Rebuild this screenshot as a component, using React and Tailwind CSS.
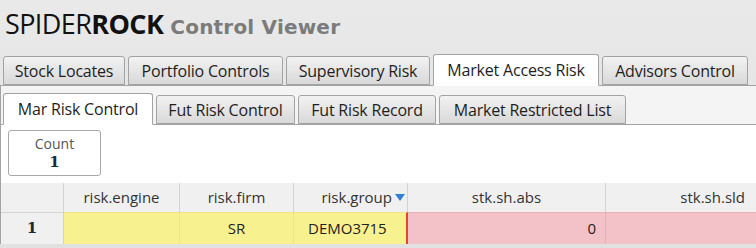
import React from 'react'

const topTabs = [
  { label: 'Stock Locates', w: 'w-[122px]' },
  { label: 'Portfolio Controls', w: 'w-[155px]' },
  { label: 'Supervisory Risk', w: 'w-[144px]' },
  { label: 'Market Access Risk', w: 'w-[166px]', active: true },
  { label: 'Advisors Control', w: 'w-[146px]' },
]

const subTabs = [
  { label: 'Mar Risk Control', w: 'w-[150px]', active: true },
  { label: 'Fut Risk Control', w: 'w-[139px]' },
  { label: 'Fut Risk Record', w: 'w-[138px]' },
  { label: 'Market Restricted List', w: 'w-[187px]' },
]

function Tab({ label, w, active }) {
  return (
    <div
      className={[
        'flex shrink-0 items-center justify-center rounded-t-[3px] border border-[#a3a3a3] text-[16px] tracking-[-0.2px] text-[#1e1e1e]',
        w,
        active
          ? 'relative z-10 -mb-px h-[32px] border-b-white bg-white'
          : 'h-[29px] bg-gradient-to-b from-[#f2f2f2] to-[#d9d9d9]',
      ].join(' ')}
    >
      {label}
    </div>
  )
}

export default function App() {
  return (
    <div className="h-[248px] w-[756px] overflow-hidden bg-gradient-to-b from-[#e9e9e9] to-[#e1e1e1] font-['Open_Sans','Noto_Sans',sans-serif]">
      <div className="flex h-[54px] items-baseline px-[5px] pt-[6px]">
        <span className="text-[27px] leading-[36px] tracking-[-0.6px] text-[#111]">
          SPIDER<span className="font-bold">ROCK</span>
        </span>
        <span className="ml-[7px] font-['DejaVu_Sans',sans-serif] text-[20px] font-bold tracking-[0.2px] text-[#7b7b7b]">
          Control Viewer
        </span>
      </div>

      <div className="flex items-end gap-[3px] border-b border-[#a3a3a3] pl-[3px]">
        {topTabs.map((t) => (
          <Tab key={t.label} {...t} />
        ))}
      </div>

      <div className="border-l border-[#a3a3a3] bg-[#f4f4f4] pt-[7px]">
        <div className="flex items-end gap-[3px] border-b border-[#a3a3a3] pl-[2px]">
          {subTabs.map((t) => (
            <Tab key={t.label} {...t} />
          ))}
        </div>

        <div className="bg-white">
          <div className="px-[7px] pt-[5px] pb-[7px]">
            <div className="flex h-[46px] w-[93px] flex-col items-center justify-center rounded-[3px] border border-[#a8a8a8] bg-white leading-[18px]">
              <span className="text-[14px] text-[#555]">Count</span>
              <span className="font-['DejaVu_Serif',serif] text-[15px] font-bold text-[#1c2a38]">1</span>
            </div>
          </div>

          <div className="grid grid-cols-[63px_116px_114px_114px_198px_1fr] text-[15px] text-[#333]">
            <div className="h-[29px] border-r border-[#d2d2d2] bg-[#f0f0f0]" />
            <div className="flex h-[29px] items-center justify-center border-r border-[#d2d2d2] bg-[#f0f0f0]">risk.engine</div>
            <div className="flex h-[29px] items-center justify-center border-r border-[#d2d2d2] bg-[#f0f0f0]">risk.firm</div>
            <div className="flex h-[29px] items-center justify-end gap-[3px] border-r border-[#d2d2d2] bg-[#f0f0f0] pr-[2px]">
              risk.group
              <svg width="10" height="9" viewBox="0 0 10 9">
                <path d="M0 1 L10 1 L5 8 Z" fill="#2f7fd6" />
              </svg>
            </div>
            <div className="flex h-[29px] items-center justify-center border-r border-[#d2d2d2] bg-[#f0f0f0]">stk.sh.abs</div>
            <div className="flex h-[29px] items-center justify-end bg-[#f0f0f0] pr-[11px]">stk.sh.sld</div>

            <div className="flex h-[32px] items-center justify-center border-r border-t border-[#d2d2d2] bg-[#f0f0f0] font-['DejaVu_Serif',serif] text-[15px] font-bold text-[#1c2a38]">
              1
            </div>
            <div className="h-[32px] border-r border-t border-[#ece48a] bg-[#f8f18f]" />
            <div className="flex h-[32px] items-center justify-center border-r border-t border-[#ece48a] bg-[#f8f18f] text-[#222]">SR</div>
            <div className="flex h-[32px] items-center border-r-2 border-t border-r-[#e0452f] border-t-[#ece48a] bg-[#f8f18f] pl-[14px] text-[#222]">DEMO3715</div>
            <div className="flex h-[32px] items-center justify-end border-r border-t border-[#e6b2b8] bg-[#f2c2c8] pr-[9px] text-[#222]">0</div>
            <div className="h-[32px] border-t border-[#e6b2b8] bg-[#f2c2c8]" />
          </div>
        </div>
      </div>
    </div>
  )
}
